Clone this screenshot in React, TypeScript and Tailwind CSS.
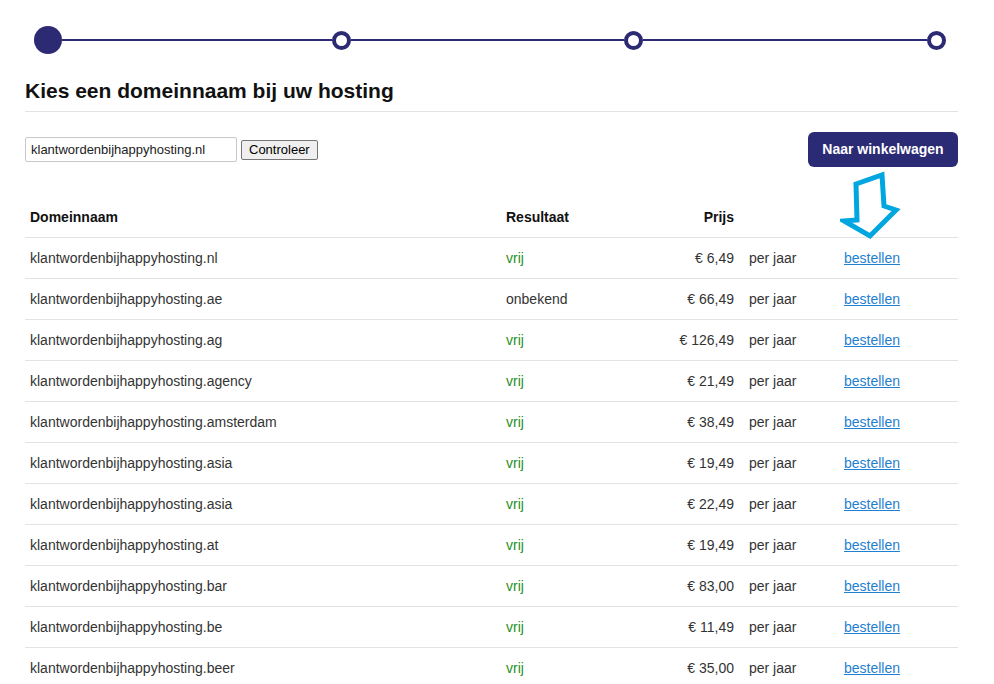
import React from "react";

const rows = [
  { tld: "nl", result: "vrij", price: "6,49" },
  { tld: "ae", result: "onbekend", price: "66,49" },
  { tld: "ag", result: "vrij", price: "126,49" },
  { tld: "agency", result: "vrij", price: "21,49" },
  { tld: "amsterdam", result: "vrij", price: "38,49" },
  { tld: "asia", result: "vrij", price: "19,49" },
  { tld: "asia", result: "vrij", price: "22,49" },
  { tld: "at", result: "vrij", price: "19,49" },
  { tld: "bar", result: "vrij", price: "83,00" },
  { tld: "be", result: "vrij", price: "11,49" },
  { tld: "beer", result: "vrij", price: "35,00" },
];

const Ring = () => (
  <div className="w-[19px] h-[19px] rounded-full border-[4px] border-[#2b2a73] bg-white shrink-0" />
);

const App = () => {
  return (
    <div
      className="h-[684px] overflow-hidden bg-white text-[#333]"
      style={{ fontFamily: '"Liberation Sans", Arial, sans-serif' }}
    >
      <div className="w-[933px] ml-[25px]">
        {/* Stepper */}
        <div className="flex items-center pt-[26px] pl-[9px]">
          <div className="w-[28px] h-[28px] rounded-full bg-[#2b2a73] shrink-0" />
          <div className="h-[2px] w-[270px] bg-[#2b2a73]" />
          <Ring />
          <div className="h-[2px] w-[273px] bg-[#2b2a73]" />
          <Ring />
          <div className="h-[2px] w-[284px] bg-[#2b2a73]" />
          <Ring />
        </div>

        <h1 className="mt-[25px] text-[21px] leading-[24px] font-bold text-[#111] pb-[8px] border-b border-[#e3e3e3]">
          Kies een domeinnaam bij uw hosting
        </h1>

        {/* Search row */}
        <div className="relative mt-[20px] flex items-center justify-between h-[35px]">
          <div className="flex items-center gap-[4px]">
            <input
              defaultValue="klantwordenbijhappyhosting.nl"
              className="w-[212px] h-[25px] border border-[#c8c8c8] rounded-[2px] px-[5px] text-[13px] text-[#222] outline-none"
            />
            <button className="h-[20px] px-[7px] bg-[#efefef] border border-[#767676] rounded-[2px] text-[13px] leading-[18px] text-black">
              Controleer
            </button>
          </div>
          <button className="w-[150px] h-[35px] rounded-[6px] bg-[#2b2a75] text-white text-[14px] font-bold">
            Naar winkelwagen
          </button>

          {/* Arrow annotation */}
          <svg
            className="absolute left-[815px] top-[38px]"
            width="62"
            height="72"
            viewBox="0 0 62 72"
          >
            <polygon
              points="16,14 42,5 44,36 56,40 30,66 4,51 17,50"
              fill="white"
              stroke="#00a6e0"
              strokeWidth="5"
              strokeLinejoin="miter"
            />
          </svg>
        </div>

        {/* Table */}
        <div className="mt-[30px] text-[14px]">
          <div className="grid grid-cols-[476px_120px_118px_100px_1fr] h-[41px] items-center border-b border-[#e3e3e3] font-bold text-[#111]">
            <div className="px-[5px]">Domeinnaam</div>
            <div className="px-[5px]">Resultaat</div>
            <div className="px-[5px] text-right">Prijs</div>
            <div />
            <div />
          </div>
          {rows.map((r, i) => (
            <div
              key={i}
              className="grid grid-cols-[476px_120px_118px_100px_1fr] h-[41px] items-center border-b border-[#e3e3e3]"
            >
              <div className="px-[5px]">klantwordenbijhappyhosting.{r.tld}</div>
              <div className={`px-[5px] ${r.result === "vrij" ? "text-[#1f8f1f]" : "text-[#333]"}`}>
                {r.result}
              </div>
              <div className="px-[5px] text-right">€ {r.price}</div>
              <div className="pl-[10px]">per jaar</div>
              <div className="px-[5px]">
                <a href="#" className="text-[#1f7fd0] underline">
                  bestellen
                </a>
              </div>
            </div>
          ))}
        </div>
      </div>
    </div>
  );
};

export default App;
